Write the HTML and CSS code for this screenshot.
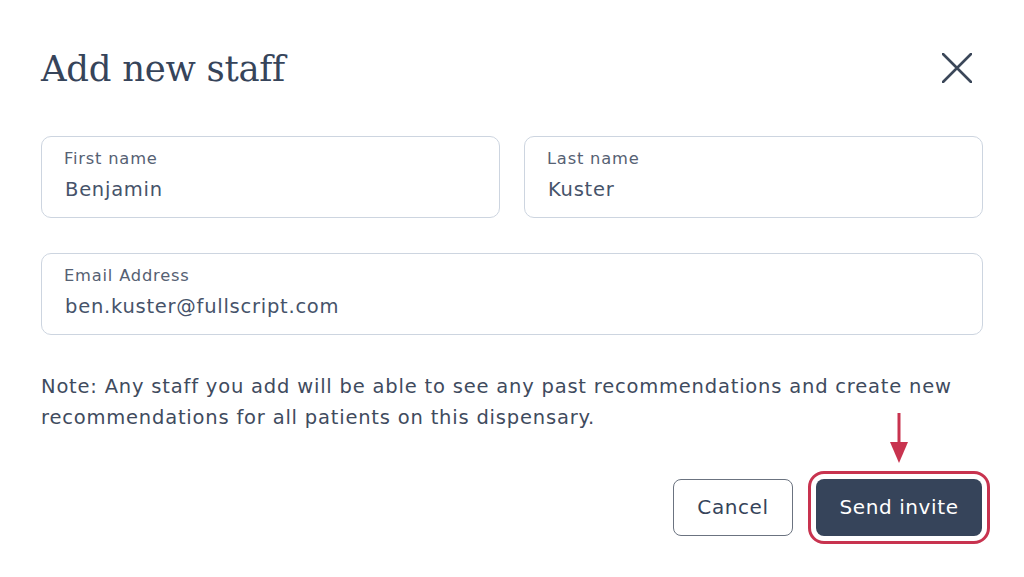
FILE: index.html
```html
<!DOCTYPE html>
<html lang="en">
<head>
<meta charset="utf-8">
<title>Add new staff</title>
<link rel="stylesheet" href="styles.css">
</head>
<body>
<div class="dialog">
  <div class="header">
    <h1 class="title">Add new staff</h1>
    <button class="close" aria-label="Close">
      <svg width="30" height="30" viewBox="0 0 30 30"><path d="M1 1 L29 29 M29 1 L1 29" stroke="#3b4759" stroke-width="2.6" stroke-linecap="round" fill="none"/></svg>
    </button>
  </div>
  <div class="row two">
    <div class="field"><span class="label">First name</span><span class="value">Benjamin</span></div>
    <div class="field"><span class="label">Last name</span><span class="value">Kuster</span></div>
  </div>
  <div class="row">
    <div class="field"><span class="label">Email Address</span><span class="value">ben.kuster@fullscript.com</span></div>
  </div>
  <p class="note">Note: Any staff you add will be able to see any past recommendations and create new recommendations for all patients on this dispensary.</p>
  <div class="actions">
    <button class="btn secondary">Cancel</button>
    <div class="highlight-wrap">
      <svg class="arrow" width="20" height="52" viewBox="0 0 20 52"><path d="M10 0 V32" stroke="#c8334f" stroke-width="3" fill="none"/><path d="M1 29 L19 29 L10 50 Z" fill="#c8334f"/></svg>
      <button class="btn primary">Send invite</button>
    </div>
  </div>
</div>
</body>
</html>
```
FILE: styles.css
```css
* { box-sizing: border-box; }
html, body { margin: 0; padding: 0; background: #ffffff; }
body { font-family: "DejaVu Sans", "Noto Sans", sans-serif; color: #3b4759; }
.dialog { padding: 38px 41px 0 41px; width: 1024px; min-height: 577px; }
.header { display: flex; justify-content: space-between; align-items: center; height: 60px; }
.title { margin: 0; font-family: "DejaVu Serif", "Liberation Serif", serif; font-weight: 400; font-size: 35.5px; color: #36445a; letter-spacing: -0.3px; }
.close { background: none; border: 0; padding: 0; margin-right: 11px; width: 30px; height: 30px; display: flex; }
.row { display: grid; grid-template-columns: 1fr; margin-top: 38px; }
.row.two { grid-template-columns: 1fr 1fr; gap: 24px; }
.row + .row { margin-top: 35px; }
.field { border: 1px solid #cdd5e0; border-radius: 10px; height: 82px; padding: 10px 22px 0 22px; display: flex; flex-direction: column; }
.label { font-size: 16.3px; line-height: 24px; color: #566173; letter-spacing: 0.8px; }
.value { font-size: 19.5px; line-height: 30px; color: #46536a; margin-left: 1px; margin-top: 4px; letter-spacing: 0.75px; }
.note { margin: 36px 0 0 0; font-size: 19.5px; line-height: 31px; color: #3f4b5e; letter-spacing: 0.8px; }
.actions { display: flex; justify-content: flex-end; gap: 23px; margin-top: 46px; padding-right: 1px; }
.btn { font-family: "DejaVu Sans", "Noto Sans", sans-serif; font-size: 20px; height: 57px; padding-bottom: 3px; border-radius: 8px; cursor: pointer; letter-spacing: 0.6px; }
.secondary { width: 120px; background: #fff; border: 1px solid #6b7380; color: #36445a; }
.highlight-wrap { position: relative; display: flex; }
.primary { width: 166px; background: #36445a; color: #fff; border: 0; outline: 3px solid #c8334f; outline-offset: 5px; }
.arrow { position: absolute; left: 73px; top: -66px; }
```
